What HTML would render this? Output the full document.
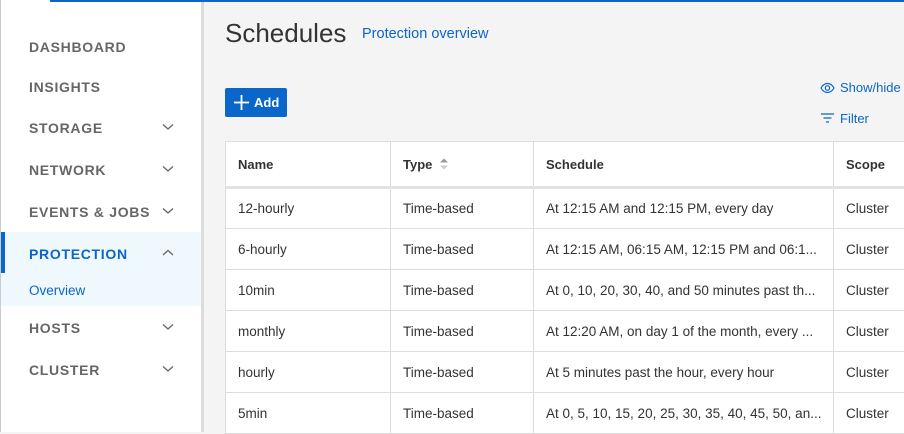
<!DOCTYPE html>
<html><head><style>
*{box-sizing:border-box;margin:0;padding:0}
body{width:904px;height:432px;overflow:hidden;font-family:"Liberation Sans",sans-serif;background:#f4f4f4;position:relative}
#top{position:absolute;left:50px;top:0;width:854px;height:2px;background:#0a66c8}
#side{position:absolute;left:0;top:0;width:201px;height:432px;background:#fff;border-left:1px solid #ccc}
#sb{position:absolute;left:201px;top:0;width:3px;height:432px;background:#dcdcdc}
.nav{position:absolute;left:29px;font-size:14px;font-weight:bold;color:#666;letter-spacing:.7px}
.chev{position:absolute;left:162px;width:12px;height:8px}
#act{position:absolute;left:1px;top:232px;width:200px;height:74px;background:#eff8fd}
#bar{position:absolute;left:1px;top:232px;width:4px;height:41px;background:#0a66c8}
h1{position:absolute;left:225px;top:18px;font-size:26px;font-weight:normal;color:#333}
.link{color:#0a66c8;font-size:14px;position:absolute}
#add{position:absolute;left:225px;top:88px;width:62px;height:29px;background:#0a66c8;border-radius:2px;color:#fff;font-weight:bold;font-size:13px}
table{position:absolute;left:225px;top:141px;border-collapse:collapse;background:#fff;font-size:13.5px;color:#333;table-layout:fixed;width:700px}
td,th{border:1px solid #ddd;height:41px;padding:0 12px;text-align:left;white-space:nowrap;overflow:hidden}
th{height:46px;border-bottom:3px solid #e2e2e2;font-weight:bold;color:#333;font-size:13px}
</style></head><body>
<div id="side"></div><div id="sb"></div>
<div id="act"></div><div id="bar"></div>
<div class="nav" style="top:39px">DASHBOARD</div>
<div class="nav" style="top:79px">INSIGHTS</div>
<div class="nav" style="top:120px">STORAGE</div>
<div class="nav" style="top:162px">NETWORK</div>
<div class="nav" style="top:204px">EVENTS &amp; JOBS</div>
<div class="nav" style="top:246px;color:#0a66c8">PROTECTION</div>
<div style="position:absolute;left:29px;top:283px;font-size:13.5px;color:#0a66c8">Overview</div>
<div class="nav" style="top:320px">HOSTS</div>
<div class="nav" style="top:362px">CLUSTER</div>
<svg class="chev" style="top:123px" viewBox="0 0 12 8"><path d="M1 1.5l5 4.5 5-4.5" fill="none" stroke="#666" stroke-width="1.3"/></svg>
<svg class="chev" style="top:165px" viewBox="0 0 12 8"><path d="M1 1.5l5 4.5 5-4.5" fill="none" stroke="#666" stroke-width="1.3"/></svg>
<svg class="chev" style="top:207px" viewBox="0 0 12 8"><path d="M1 1.5l5 4.5 5-4.5" fill="none" stroke="#666" stroke-width="1.3"/></svg>
<svg class="chev" style="top:249px" viewBox="0 0 12 8"><path d="M1 6l5-4.5 5 4.5" fill="none" stroke="#666" stroke-width="1.3"/></svg>
<svg class="chev" style="top:323px" viewBox="0 0 12 8"><path d="M1 1.5l5 4.5 5-4.5" fill="none" stroke="#666" stroke-width="1.3"/></svg>
<svg class="chev" style="top:365px" viewBox="0 0 12 8"><path d="M1 1.5l5 4.5 5-4.5" fill="none" stroke="#666" stroke-width="1.3"/></svg>
<div id="top"></div>
<h1>Schedules</h1>
<div class="link" style="left:362px;top:26px;font-size:14.5px">Protection overview</div>
<div id="add"><svg style="position:absolute;left:9px;top:7px" width="15" height="15"><path d="M7.5 0v15M0 7.5h15" stroke="#fff" stroke-width="1.8"/></svg><span style="position:absolute;left:29px;top:7px">Add</span></div>
<svg style="position:absolute;left:820px;top:82px" width="15" height="12" viewBox="0 0 15 12"><path d="M1 6C3 2.5 5 1.5 7.5 1.5S12 2.5 14 6C12 9.5 10 10.5 7.5 10.5S3 9.5 1 6z" fill="none" stroke="#0a66c8" stroke-width="1.2"/><circle cx="7.5" cy="6" r="2.2" fill="none" stroke="#0a66c8" stroke-width="1.2"/></svg>
<div class="link" style="left:840px;top:80px;font-size:13px">Show/hide</div>
<svg style="position:absolute;left:821px;top:113px" width="13" height="10"><path d="M0 1h13M2.5 5h8M5 9h3" stroke="#0a66c8" stroke-width="1.3"/></svg>
<div class="link" style="left:840px;top:111px;font-size:13px">Filter</div>
<table>
<colgroup><col style="width:165px"><col style="width:143px"><col style="width:300px"><col style="width:92px"></colgroup>
<tr><th>Name</th><th>Type <svg width="10" height="14" style="vertical-align:-2px;margin-left:3px"><path d="M1 5.5L5 1.5 9 5.5z" fill="#999"/><path d="M1 8.5L5 12.5 9 8.5z" fill="#ccc"/></svg></th><th>Schedule</th><th>Scope</th></tr>
<tr><td>12-hourly</td><td>Time-based</td><td>At 12:15 AM and 12:15 PM, every day</td><td>Cluster</td></tr>
<tr><td>6-hourly</td><td>Time-based</td><td>At 12:15 AM, 06:15 AM, 12:15 PM and 06:1...</td><td>Cluster</td></tr>
<tr><td>10min</td><td>Time-based</td><td>At 0, 10, 20, 30, 40, and 50 minutes past th...</td><td>Cluster</td></tr>
<tr><td>monthly</td><td>Time-based</td><td>At 12:20 AM, on day 1 of the month, every ...</td><td>Cluster</td></tr>
<tr><td>hourly</td><td>Time-based</td><td>At 5 minutes past the hour, every hour</td><td>Cluster</td></tr>
<tr><td>5min</td><td>Time-based</td><td>At 0, 5, 10, 15, 20, 25, 30, 35, 40, 45, 50, an...</td><td>Cluster</td></tr>
</table>
</body></html>
